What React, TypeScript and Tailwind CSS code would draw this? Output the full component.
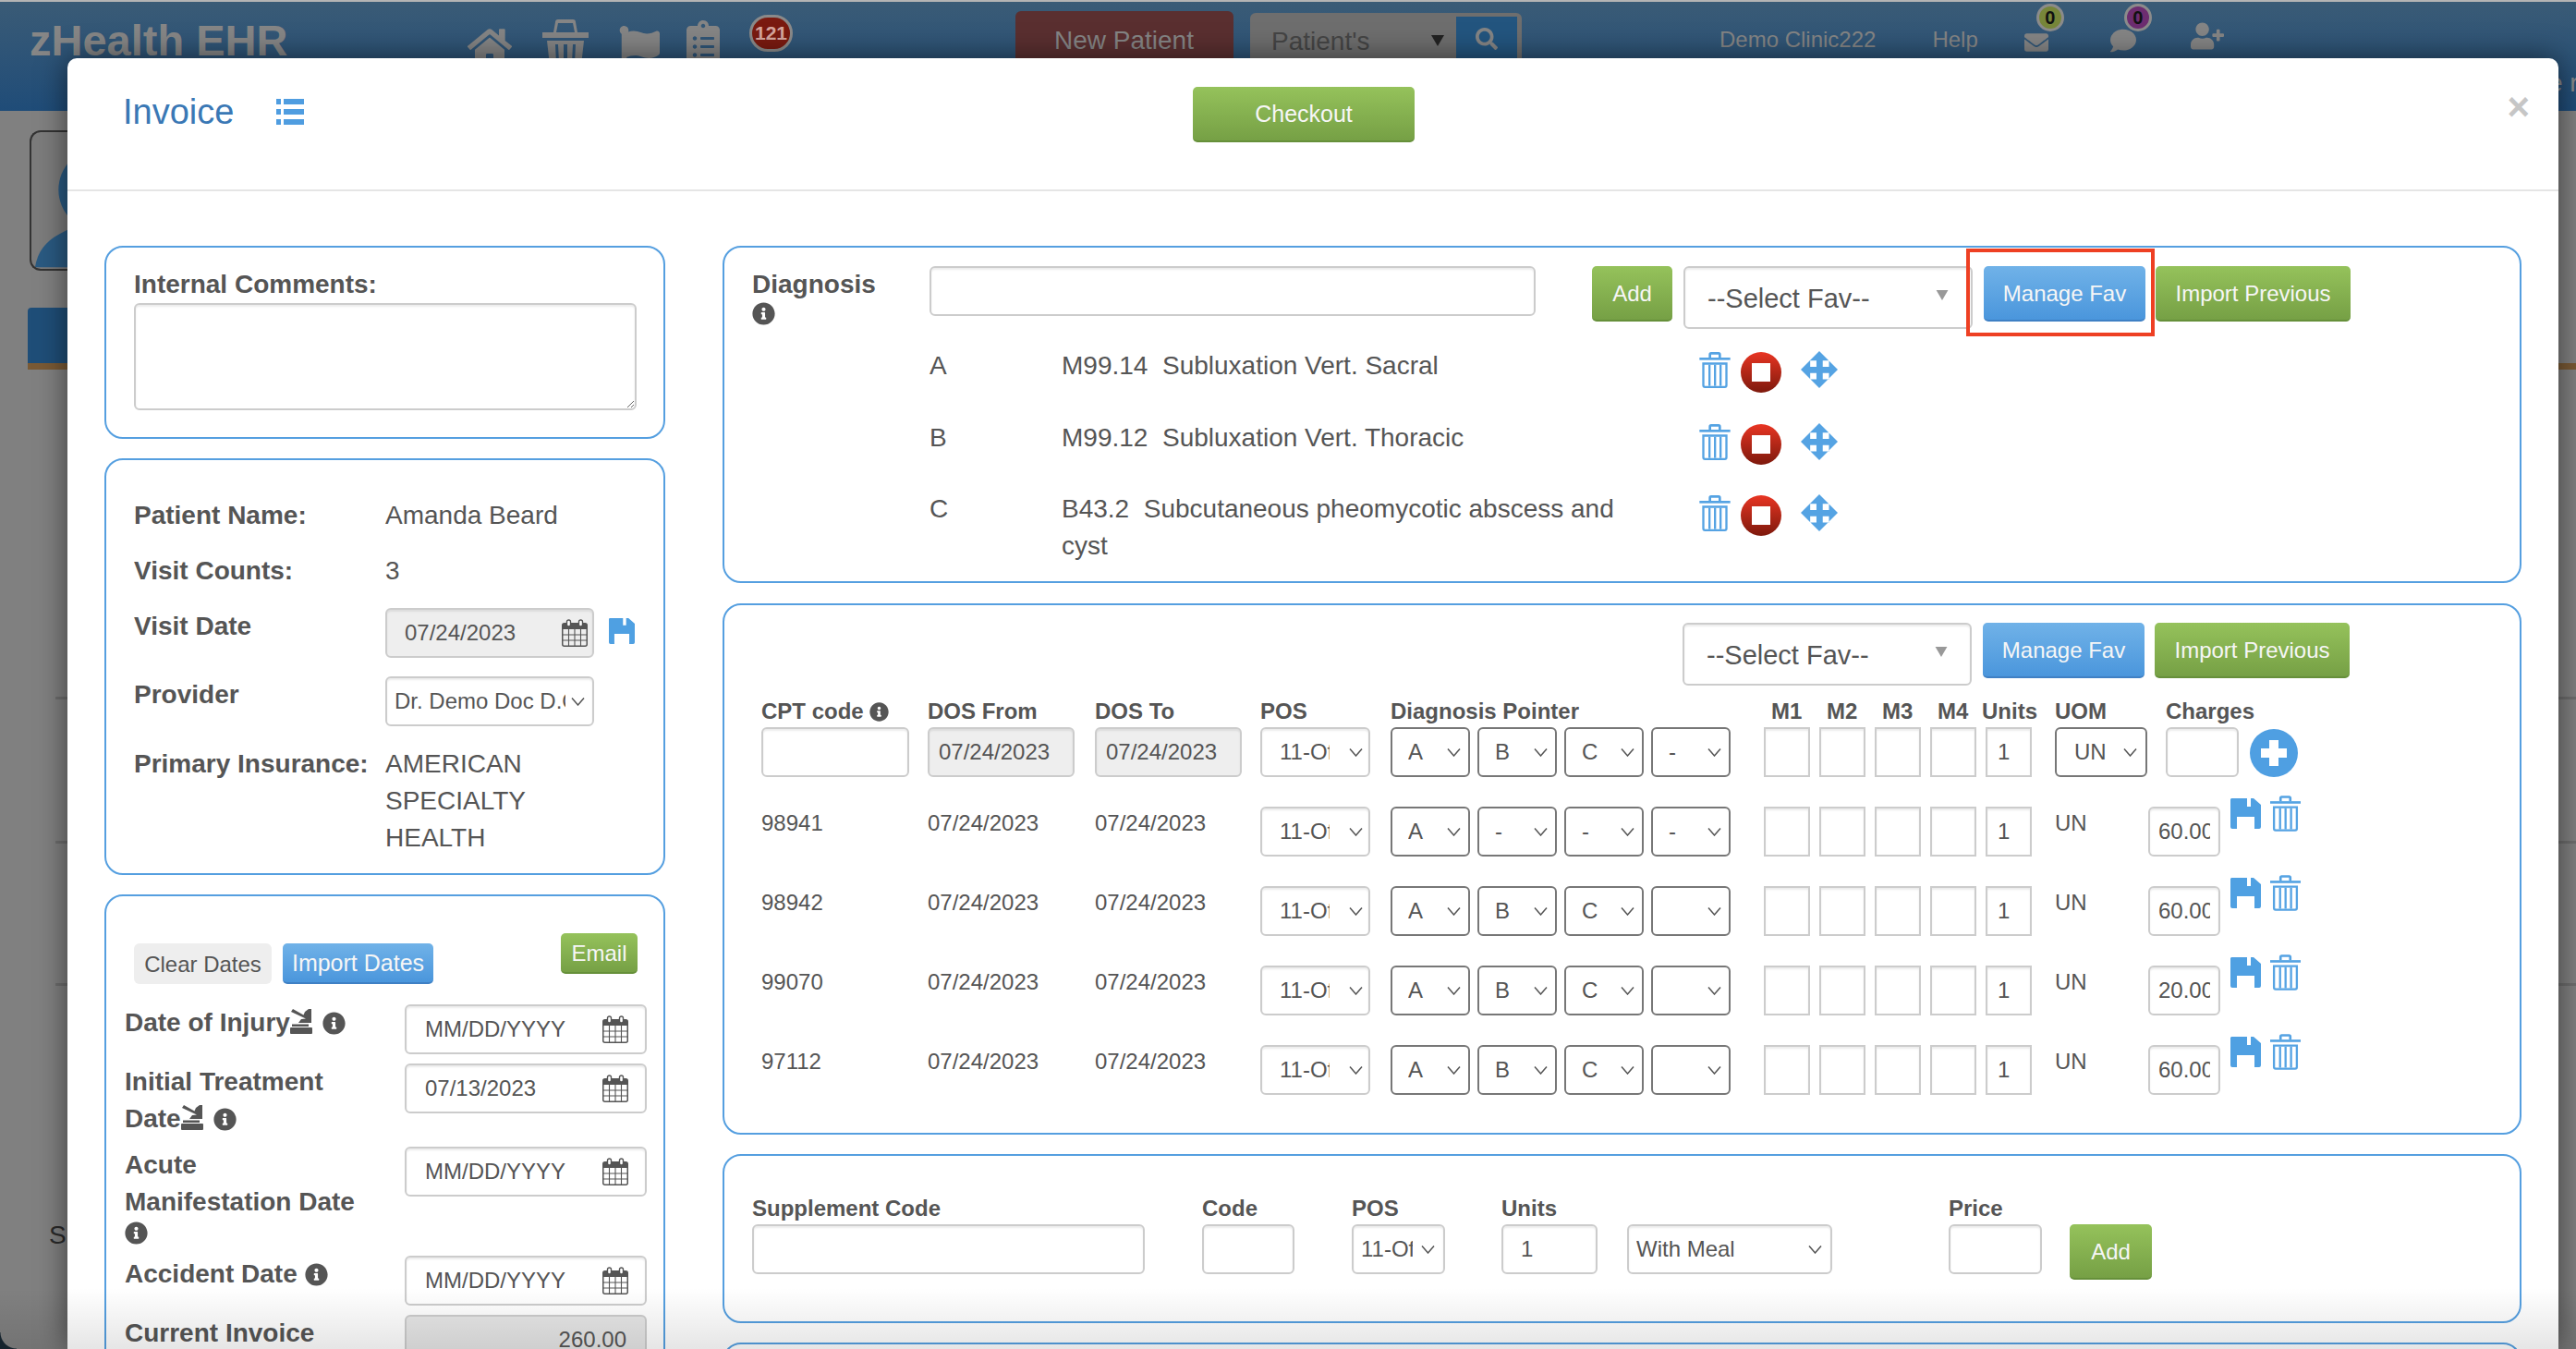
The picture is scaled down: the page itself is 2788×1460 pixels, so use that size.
import React from "react";
import { FaFlag, FaClipboardList, FaEnvelope, FaComment, FaUserPlus, FaSearch, FaInfoCircle, FaHome } from "react-icons/fa";

const inputBase =
  "block h-[54px] border-2 border-[#ccc] rounded-[6px] bg-white text-[24px] text-[#555] shadow-[inset_0_2px_2px_rgba(0,0,0,0.08)] outline-none";
const greenBtn =
  "block rounded-[5px] border-b-2 border-[#66903a] bg-linear-to-b from-[#95c25b] to-[#76a045] pt-[2px] text-[24px] text-[#f6f6f6] text-center";
const blueBtn =
  "block rounded-[5px] border-b-2 border-[#3f80c4] bg-linear-to-b from-[#70b2e8] to-[#4a96dc] pt-[2px] text-[24px] text-[#f6f6f6] text-center";
const panel = "rounded-[20px] border-2 border-[#559fe0] bg-white";
const labelB = "text-[28px] font-bold leading-[40px] text-[#555]";

function Info({ size = 25, className = "" }: { size?: number; className?: string }) {
  return <FaInfoCircle size={size} className={"inline-block shrink-0 text-[#555] " + className} />;
}

function Trash({ className = "" }: { className?: string }) {
  return (
    <svg viewBox="0 0 100 117" className={className} fill="#55a3e3">
      <path d="M30 18V8a8 8 0 0 1 8-8h24a8 8 0 0 1 8 8v10h-8V8H38v10z" />
      <rect x="0" y="18" width="100" height="8" />
      <path fillRule="evenodd" d="M9 34h82v74a9 9 0 0 1-9 9H18a9 9 0 0 1-9-9zM16 41v67a2 2 0 0 0 2 2h64a2 2 0 0 0 2-2V41z" />
      <rect x="29" y="41" width="7" height="69" />
      <rect x="47" y="41" width="7" height="69" />
      <rect x="65" y="41" width="7" height="69" />
    </svg>
  );
}

function Save({ className = "" }: { className?: string }) {
  return (
    <svg viewBox="0 0 33 33" className={className} fill="#4fa0e2">
      <path fillRule="evenodd" d="M1 0H25L33 7V31a2 2 0 0 1-2 2H26V20H7V33H2a2 2 0 0 1-2-2V1zM18 0V9H22V0z" />
    </svg>
  );
}

function Move({ className = "" }: { className?: string }) {
  return (
    <svg viewBox="0 0 118 118" className={className} fill="#55a3e3">
      <path
        fillRule="evenodd"
        d="M59 0L118 59L59 118L0 59ZM30 30V50H50V30ZM70 30V50H90V30ZM30 70V90H50V70ZM70 70V90H90V70Z"
      />
    </svg>
  );
}

function Stop() {
  return (
    <div className="flex h-[44px] w-[44px] shrink-0 items-center justify-center rounded-full bg-linear-to-b from-[#e93523] to-[#7e190c]">
      <div className="h-[20px] w-[20px] bg-white" />
    </div>
  );
}

function Calendar({ className = "" }: { className?: string }) {
  return (
    <svg viewBox="0 0 28 30" className={className} fill="none" stroke="#555">
      <rect x="0.75" y="4.75" width="26.5" height="24.5" rx="2" strokeWidth="1.5" />
      <rect x="1" y="5" width="26" height="6" fill="#555" strokeWidth="0" />
      <rect x="5.5" y="1" width="4" height="7" rx="2" fill="#fff" strokeWidth="1.4" />
      <rect x="18.5" y="1" width="4" height="7" rx="2" fill="#fff" strokeWidth="1.4" />
      <path d="M1 17H27M1 23H27M7.5 11V29M14 11V29M20.5 11V29" strokeWidth="1.1" />
    </svg>
  );
}

function Chevron({ className = "" }: { className?: string }) {
  return (
    <svg viewBox="0 0 15 9" className={"h-[9px] w-[15px] " + className} fill="none" stroke="#555" strokeWidth="1.5">
      <path d="M1 0.5L7.5 8L14 0.5" />
    </svg>
  );
}

function Injury({ className = "" }: { className?: string }) {
  return (
    <svg viewBox="0 0 24 27" className={className} fill="#555">
      <rect x="0" y="20" width="24" height="7" rx="1" />
      <rect x="2" y="16.5" width="18" height="2.5" />
      <path d="M20 0h3v15H9l3-4 5-0.5L1 3l2-3 11.5 6.5L16 3z" />
    </svg>
  );
}

function Sel({
  value,
  w,
  pl,
  textW,
  chevRight,
  dark = false,
}: {
  value: string;
  w: string;
  pl: string;
  textW: string;
  chevRight: string;
  dark?: boolean;
}) {
  return (
    <div
      className={
        "flex h-[54px] shrink-0 items-center justify-between rounded-[6px] border-2 bg-white text-[24px] text-[#555] " +
        (dark ? "border-[#777] " : "border-[#ccc] shadow-[inset_0_2px_2px_rgba(0,0,0,0.08)] ") +
        w +
        " " +
        pl +
        " " +
        chevRight
      }
    >
      <span className={"block overflow-hidden whitespace-nowrap " + textW}>{value}</span>
      <Chevron className="shrink-0" />
    </div>
  );
}

function Pointer({ value }: { value: string }) {
  return <Sel value={value} w="w-[86px]" pl="pl-[17px]" textW="w-[30px]" chevRight="pr-[8px]" dark />;
}

function PosSel() {
  return <Sel value="11-Office" w="w-[119px]" pl="pl-[19px]" textW="w-[54px]" chevRight="pr-[6px]" />;
}

function FavControls({ highlight }: { highlight?: boolean }) {
  return (
    <>
      <div className="flex h-[68px] w-[313px] items-center justify-between rounded-[6px] border-2 border-[#ccc] bg-white pl-[24px] pr-[24px] text-[29px] text-[#555] shadow-[inset_0_2px_2px_rgba(0,0,0,0.08)]">
        <span className="relative top-[2px]">--Select Fav--</span>
        <svg viewBox="0 0 14 12" className="relative top-[-3px] h-[11px] w-[14px]" fill="#999">
          <path d="M0 0H14L7 12Z" />
        </svg>
      </div>
      <div className="relative ml-[12px]">
        <button className={blueBtn + " h-[60px] w-[175px]"}>Manage Fav</button>
        {highlight && (
          <div className="absolute -bottom-[16px] -left-[19px] -right-[10px] -top-[19px] border-4 border-[#ee4023]" />
        )}
      </div>
      <button className={greenBtn + " ml-[11px] h-[60px] w-[211px]"}>Import Previous</button>
    </>
  );
}

function DiagRow({ letter, code, desc, h }: { letter: string; code: string; desc: string; h: string }) {
  return (
    <div className={"flex items-start text-[28px] leading-[40px] text-[#555] " + h}>
      <div className="w-[143px]">{letter}</div>
      <div className="w-[640px]">
        {code}
        {"\u00a0\u00a0"}
        {desc}
      </div>
      <div className="ml-[50px] mt-[5px] flex items-start">
        <Trash className="h-[39px] w-[34px]" />
        <div className="ml-[11px]">
          <Stop />
        </div>
        <Move className="ml-[21px] mt-[-1px] h-[40px] w-[40px]" />
      </div>
    </div>
  );
}

function DateField({ value }: { value: string }) {
  return (
    <div className={inputBase + " flex w-[262px] items-center justify-between pl-[20px] pr-[18px]"}>
      <span>{value}</span>
      <Calendar className="h-[30px] w-[28px]" />
    </div>
  );
}

function Box() {
  return <input readOnly className="block h-[54px] w-[50px] border-2 border-[#ccc] bg-white shadow-[inset_0_2px_2px_rgba(0,0,0,0.08)] outline-none" />;
}

function UnitBox() {
  return (
    <input
      readOnly
      value="1"
      className="block h-[54px] w-[50px] border-2 border-[#ccc] bg-white pl-[11px] text-[24px] text-[#555] shadow-[inset_0_2px_2px_rgba(0,0,0,0.08)] outline-none"
    />
  );
}

const rows = [
  { code: "98941", p: ["A", "-", "-", "-"], charge: "60.00" },
  { code: "98942", p: ["A", "B", "C", ""], charge: "60.00" },
  { code: "99070", p: ["A", "B", "C", ""], charge: "20.00" },
  { code: "97112", p: ["A", "B", "C", ""], charge: "60.00" },
];

const th = "text-[24px] font-bold leading-[34px] text-[#555] whitespace-nowrap";
const td = "text-[24px] leading-[36px] text-[#555]";

function Background() {
  return (
    <>
      <div className="h-[2px] bg-[#b4b4b4]" />
      <header className="relative flex h-[118px] bg-linear-to-b from-[#3a5b76] to-[#1f4c78] text-[#858585]">
        <div className="ml-[32px] mt-[16px] w-[474px] text-[47px] font-bold leading-[52px] text-[#868686]">zHealth EHR</div>
        <FaHome className="mt-[24px] h-[48px] w-[48px]" />
        <svg viewBox="0 0 50 50" className="ml-[33px] mt-[19px] h-[50px] w-[50px]" fill="#858585">
          <path d="M12 14L14 3a3 3 0 0 1 3-3h16a3 3 0 0 1 3 3l2 11h-3L33 4H17l-2 10zM0 14h50v6H0zM5 23h40l-3 27H8zM14 27l1 20h3l-1-20zM23 27v20h4V27zM33 27l-1 20h3l1-20z" />
        </svg>
        <FaFlag className="ml-[33px] mt-[26px] h-[44px] w-[44px]" />
        <FaClipboardList className="ml-[29px] mt-[20px] h-[48px] w-[36px]" />
        <div className="ml-[32px] mt-[14px] flex h-[40px] w-[47px] items-center justify-center rounded-full border-[3px] border-[#8a8a8a] bg-[#7a1a10] text-[21px] font-bold text-[#d6a69e]">
          121
        </div>
        <div className="ml-[241px] mt-[10px] h-[60px] w-[236px] rounded-[6px] bg-[#5a2f30] pl-[42px] pt-[16px] text-[28px] leading-[32px]">
          New Patient
        </div>
        <div className="ml-[18px] mt-[12px] flex h-[60px] w-[294px] rounded-[6px] bg-[#6e6e6e] pl-[23px] pr-[3px] pt-[4px]">
          <span className="w-[171px] pt-[11px] text-[28px] leading-[32px] text-[#454545]">Patient's</span>
          <svg viewBox="0 0 14 12" className="mt-[20px] h-[12px] w-[18px]" fill="#222">
            <path d="M0 0H14L7 12Z" />
          </svg>
          <div className="ml-[11px] flex h-[56px] w-[66px] items-start justify-center bg-[#23557f] pt-[12px]">
            <FaSearch className="h-[24px] w-[24px]" />
          </div>
        </div>
        <div className="ml-[214px] mt-[25px] text-[24px] leading-[32px]">Demo Clinic222</div>
        <div className="ml-[61px] mt-[25px] text-[24px] leading-[32px]">Help</div>
        <div className="relative ml-[48px] mt-[31px] h-[26px] w-[30px]">
          <FaEnvelope className="h-[26px] w-[30px]" />
          <div className="absolute left-[15px] top-[-29px] flex h-[30px] w-[30px] items-center justify-center rounded-full border-[3px] border-[#8b8b8b] bg-[#77863a] text-[20px] font-bold text-[#111]">
            0
          </div>
        </div>
        <div className="relative ml-[63px] mt-[28px] h-[26px] w-[32px]">
          <FaComment className="h-[28px] w-[32px]" />
          <div className="absolute left-[17px] top-[-26px] flex h-[30px] w-[30px] items-center justify-center rounded-full border-[3px] border-[#8b8b8b] bg-[#6d2d70] text-[20px] font-bold text-[#111]">
            0
          </div>
        </div>
        <FaUserPlus className="ml-[57px] mt-[22px] h-[30px] w-[36px]" />
        <span className="absolute left-[2758px] top-[72px] whitespace-nowrap text-[28px] leading-[32px] text-[#8a8a8a]">e r</span>
      </header>
      <main className="relative h-[1340px] bg-[#808080] pl-[32px]">
        <div className="h-[152px] w-[90px] translate-y-[21px] overflow-hidden rounded-l-[12px] border-2 border-r-0 border-[#333] bg-[#7c7c7c]">
          <svg viewBox="0 0 90 148" className="h-full w-full" fill="#2a5a82">
            <circle cx="76" cy="62" r="46" />
            <path d="M4 148C8 122 26 112 50 102H90V148Z" />
          </svg>
        </div>
        <div className="ml-[-2px] mt-[61px] h-[60px] w-[90px] rounded-tl-[4px] bg-[#1f4e78]" />
        <div className="ml-[-2px] h-[7px] bg-[#7a5a35]" />
        <div className="ml-[28px] mt-[354px] h-[3px] bg-[#6e6e6e]" />
        <div className="ml-[28px] mt-[153px] h-[3px] bg-[#6e6e6e]" />
        <div className="ml-[28px] mt-[151px] h-[3px] bg-[#6e6e6e]" />
        <div className="ml-[21px] mt-[254px] text-[28px] leading-[32px] text-[#2a2a2a]">S</div>
      </main>
    </>
  );
}

export default function App() {
  return (
    <div className="relative h-[1460px] w-full overflow-hidden bg-[#808080] font-['Liberation_Sans',Arial,sans-serif]">
      <Background />

      <div className="absolute bottom-0 left-[73px] top-[63px] w-[2696px] overflow-hidden rounded-t-[10px] bg-white shadow-[0_0_32px_rgba(0,0,0,0.55)]">
        {/* modal header */}
        <div className="flex h-[144px] items-start border-b-2 border-[#e5e5e5]">
          <div className="flex w-[1218px] items-center pl-[60px] pt-[38px]">
            <span className="text-[38px] leading-[40px] text-[#3a78b5]">Invoice</span>
            <svg viewBox="0 0 30 28" className="ml-[46px] h-[28px] w-[30px]" fill="#4f9de0">
              <rect x="0" y="0" width="5" height="6" />
              <rect x="8" y="0" width="22" height="6" />
              <rect x="0" y="11" width="5" height="6" />
              <rect x="8" y="11" width="22" height="6" />
              <rect x="0" y="22" width="5" height="6" />
              <rect x="8" y="22" width="22" height="6" />
            </svg>
          </div>
          <button className={greenBtn + " mt-[31px] h-[60px] w-[240px] text-[25px]"}>Checkout</button>
          <div className="flex-1 pr-[31px] pt-[27px] text-right text-[42px] font-bold leading-[52px] text-[#c6c6c6]">×</div>
        </div>

        {/* modal body */}
        <div className="flex items-start pl-[40px] pr-[40px] pt-[59px]">
          {/* left column */}
          <div className="flex w-[607px] shrink-0 flex-col gap-[21px]">
            <section className={panel + " h-[209px] pl-[30px] pt-[20px]"}>
              <div className={labelB}>Internal Comments:</div>
              <textarea className="block h-[116px] w-[544px] rounded-[6px] border-2 border-[#ccc] bg-white shadow-[inset_0_2px_2px_rgba(0,0,0,0.08)] outline-none" />
            </section>

            <section className={panel + " h-[451px] pl-[30px] pt-[40px]"}>
              <div className="mb-[20px] flex">
                <div className={labelB + " w-[272px]"}>Patient Name:</div>
                <div className="text-[28px] leading-[40px] text-[#555]">Amanda Beard</div>
              </div>
              <div className="mb-[20px] flex">
                <div className={labelB + " w-[272px]"}>Visit Counts:</div>
                <div className="text-[28px] leading-[40px] text-[#555]">3</div>
              </div>
              <div className="mb-[20px] flex">
                <div className={labelB + " w-[272px]"}>Visit Date</div>
                <div className="flex h-[54px] w-[226px] items-center justify-between rounded-[6px] border-2 border-[#ccc] bg-[#eee] pl-[19px] pr-[5px] text-[24px] text-[#555] shadow-[inset_0_2px_2px_rgba(0,0,0,0.08)]">
                  <span>07/24/2023</span>
                  <Calendar className="h-[30px] w-[28px]" />
                </div>
                <Save className="ml-[16px] mt-[11px] h-[28px] w-[28px]" />
              </div>
              <div className="mb-[21px] flex">
                <div className={labelB + " w-[272px]"}>Provider</div>
                <Sel value="Dr. Demo Doc D.O" w="w-[226px]" pl="pl-[8px]" textW="w-[185px]" chevRight="pr-[8px]" />
              </div>
              <div className="flex">
                <div className={labelB + " w-[272px] whitespace-nowrap"}>Primary Insurance:</div>
                <div className="w-[200px] text-[28px] leading-[40px] text-[#555]">AMERICAN SPECIALTY HEALTH</div>
              </div>
            </section>

            <section className={panel + " h-[600px] pl-[20px] pt-[40px]"}>
              <div className="mb-[22px] flex h-[55px] items-start">
                <button className="ml-[10px] mt-[11px] h-[44px] w-[149px] rounded-[6px] bg-[#eee] pt-[2px] text-center text-[24px] text-[#555]">
                  Clear Dates
                </button>
                <button className={blueBtn + " ml-[12px] mt-[11px] h-[44px] w-[163px] text-[25px]"}>Import Dates</button>
                <button className={greenBtn + " ml-[138px] h-[44px] w-[83px]"}>Email</button>
              </div>
              <div className="flex flex-col gap-[10px]">
                <div className="flex h-[54px]">
                  <div className={labelB + " flex h-[40px] w-[303px] items-center"}>
                    Date of Injury
                    <Injury className="mb-[4px] h-[27px] w-[24px]" />
                    <Info className="ml-[11px]" />
                  </div>
                  <DateField value="MM/DD/YYYY" />
                </div>
                <div className="flex h-[80px]">
                  <div className={labelB + " w-[303px]"}>
                    Initial Treatment
                    <div className="flex items-center">
                      Date
                      <Injury className="mb-[4px] h-[27px] w-[24px]" />
                      <Info className="ml-[11px]" />
                    </div>
                  </div>
                  <DateField value="07/13/2023" />
                </div>
                <div className="flex h-[108px]">
                  <div className={labelB + " w-[303px]"}>
                    Acute
                    <br />
                    Manifestation Date
                    <div className="flex h-[27px] items-center">
                      <Info />
                    </div>
                  </div>
                  <DateField value="MM/DD/YYYY" />
                </div>
                <div className="flex h-[54px]">
                  <div className={labelB + " flex h-[40px] w-[303px] items-center"}>
                    Accident Date
                    <Info className="ml-[8px]" />
                  </div>
                  <DateField value="MM/DD/YYYY" />
                </div>
                <div className="flex h-[54px]">
                  <div className={labelB + " w-[303px]"}>Current Invoice</div>
                  <div className="flex h-[54px] w-[262px] items-center justify-end rounded-[6px] border-2 border-[#ccc] bg-[#e6e6e6] pr-[20px] text-[24px] text-[#555]">
                    260.00
                  </div>
                </div>
              </div>
            </section>
          </div>

          {/* right column */}
          <div className="ml-[62px] flex flex-1 flex-col gap-[21px]">
            <section className={panel + " h-[365px] pl-[30px] pt-[20px]"}>
              <div className="flex items-start">
                <div className="w-[192px]">
                  <div className={labelB + " leading-[40px]"}>Diagnosis</div>
                  <Info className="mt-[-2px]" />
                </div>
                <div className={inputBase + " w-[656px]"} />
                <button className={greenBtn + " ml-[61px] h-[60px] w-[87px]"}>Add</button>
                <div className="ml-[12px] flex items-start">
                  <FavControls highlight />
                </div>
              </div>
              <div className="mt-[20px] pl-[192px]">
                <DiagRow letter="A" code="M99.14" desc="Subluxation Vert. Sacral" h="h-[78px]" />
                <DiagRow letter="B" code="M99.12" desc="Subluxation Vert. Thoracic" h="h-[77px]" />
                <DiagRow letter="C" code="B43.2" desc="Subcutaneous pheomycotic abscess and cyst" h="h-[80px]" />
              </div>
            </section>

            <section className={panel + " mt-[1px] h-[575px] pl-[40px] pt-[19px]"}>
              <div className="ml-[997px] flex h-[67px] items-start">
                <FavControls />
              </div>
              <div className="mt-[12px] grid grid-cols-[180px_181px_179px_141px_94px_94px_94px_122px_60px_60px_60px_60px_75px_101px_1fr] grid-rows-[34px] auto-rows-[86px]">
                <div className={th + " flex items-center gap-[6px]"}>
                  CPT code <Info size={21} />
                </div>
                <div className={th}>DOS From</div>
                <div className={th}>DOS To</div>
                <div className={th}>POS</div>
                <div className={th + " col-span-4"}>Diagnosis Pointer</div>
                <div className={th + " pl-[8px]"}>M1</div>
                <div className={th + " pl-[8px]"}>M2</div>
                <div className={th + " pl-[8px]"}>M3</div>
                <div className={th + " pl-[8px]"}>M4</div>
                <div className={th + " -ml-[4px]"}>Units</div>
                <div className={th}>UOM</div>
                <div className={th + " pl-[19px]"}>Charges</div>

                <input readOnly className={inputBase + " w-[160px]"} />
                <input readOnly value="07/24/2023" className={inputBase + " w-[159px] !bg-[#eee] pl-[10px]"} />
                <input readOnly value="07/24/2023" className={inputBase + " w-[159px] !bg-[#eee] pl-[10px]"} />
                <PosSel />
                <Pointer value="A" />
                <Pointer value="B" />
                <Pointer value="C" />
                <Pointer value="-" />
                <Box />
                <Box />
                <Box />
                <Box />
                <UnitBox />
                <Sel value="UN" w="w-[100px]" pl="pl-[19px]" textW="w-[50px]" chevRight="pr-[9px]" dark />
                <div className="flex items-start pl-[19px]">
                  <input readOnly className={inputBase + " w-[79px]"} />
                  <svg viewBox="0 0 52 52" className="ml-[12px] mt-[2px] h-[52px] w-[52px]" fill="#4f9fe2">
                    <path
                      fillRule="evenodd"
                      d="M26 0a26 26 0 1 0 0 52a26 26 0 0 0 0-52ZM21 12h10v9h9v10h-9v9H21v-9h-9V21h9Z"
                    />
                  </svg>
                </div>

                {rows.map((r) => (
                  <React.Fragment key={r.code}>
                    <div className={td}>{r.code}</div>
                    <div className={td}>07/24/2023</div>
                    <div className={td}>07/24/2023</div>
                    <PosSel />
                    {r.p.map((v, i) => (
                      <Pointer key={i} value={v} />
                    ))}
                    <Box />
                    <Box />
                    <Box />
                    <Box />
                    <UnitBox />
                    <div className={td}>UN</div>
                    <div className="flex items-start">
                      <input readOnly value={r.charge} className={inputBase + " w-[78px] pl-[9px] pr-[9px]"} />
                      <Save className="ml-[11px] mt-[-9px] h-[33px] w-[33px]" />
                      <Trash className="ml-[10px] mt-[-12px] h-[39px] w-[33px]" />
                    </div>
                  </React.Fragment>
                ))}
              </div>
            </section>

            <section className={panel + " h-[183px] pl-[30px] pt-[38px]"}>
              <div className="grid grid-cols-[487px_162px_162px_136px_348px_131px_auto] grid-rows-[36px_60px]">
                <div className={th + " leading-[37px]"}>Supplement Code</div>
                <div className={th + " leading-[37px]"}>Code</div>
                <div className={th + " leading-[37px]"}>POS</div>
                <div className={th + " leading-[37px]"}>Units</div>
                <div />
                <div className={th + " leading-[37px]"}>Price</div>
                <div />

                <input readOnly className={inputBase + " w-[425px]"} />
                <input readOnly className={inputBase + " w-[100px]"} />
                <Sel value="11-Office" w="w-[101px]" pl="pl-[8px]" textW="w-[56px]" chevRight="pr-[9px]" />
                <input readOnly value="1" className={inputBase + " w-[104px] pl-[19px]"} />
                <Sel value="With Meal" w="w-[222px]" pl="pl-[8px]" textW="w-[120px]" chevRight="pr-[9px]" />
                <input readOnly className={inputBase + " w-[101px]"} />
                <button className={greenBtn + " h-[60px] w-[89px]"}>Add</button>
              </div>
            </section>

            <section className={panel + " h-[120px]"} />
          </div>
        </div>
      </div>

      <div className="pointer-events-none absolute bottom-0 left-0 right-0 h-[66px] bg-linear-to-b from-transparent to-black/10" />
      <div className="pointer-events-none absolute bottom-0 left-0 h-[18px] w-[18px] bg-[radial-gradient(circle_at_top_right,transparent_17px,#16242e_18px)]" />
    </div>
  );
}
